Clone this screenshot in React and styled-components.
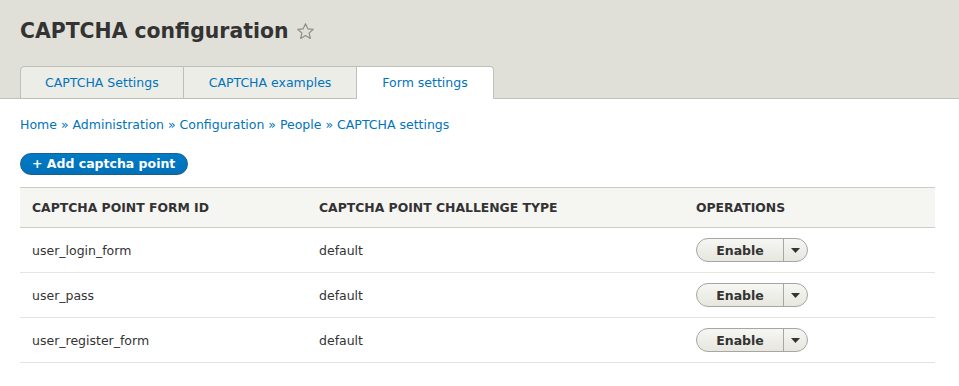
import React from "react";
import styled, { createGlobalStyle } from "styled-components";

const GlobalStyle = createGlobalStyle`
  html, body {
    margin: 0;
    padding: 0;
    background: #fff;
  }
  body {
    font-family: "DejaVu Sans", Verdana, sans-serif;
    font-size: 12.5px;
    color: #333;
  }
`;

const Header = styled.header`
  background: #e0e0d8;
  border-bottom: 1px solid #bfbfba;
  padding: 17px 20px 0;
`;

const Title = styled.h1`
  margin: 0 0 21px;
  font-size: 20.4px;
  font-weight: bold;
  line-height: 28px;
  color: #333;
  display: flex;
  align-items: center;
  gap: 8px;
`;

const Tabs = styled.ul`
  display: flex;
  margin: 0 0 -1px;
  padding: 0;
  list-style: none;
`;

const Tab = styled.li`
  box-sizing: border-box;
  height: 33px;
  padding: ${(p) => (p.first ? "0 24px" : "0 25px")};
  display: flex;
  align-items: center;
  border: 1px solid #bfbfba;
  border-bottom: ${(p) => (p.active ? "1px solid #fff" : "1px solid #bfbfba")};
  border-left-width: ${(p) => (p.first ? "1px" : "0")};
  border-radius: ${(p) => (p.first ? "4px 0 0 0" : p.last ? "0 4px 0 0" : "0")};
  background: ${(p) => (p.active ? "#fff" : "#ededE8")};
  color: #0074bd;
  font-size: 12.5px;
`;

const Content = styled.main`
  padding: 17px 24px 0 20px;
`;

const Breadcrumb = styled.nav`
  color: #0074bd;
  font-size: 12.5px;
  line-height: 18px;
  margin-bottom: 19px;
`;

const PrimaryButton = styled.button`
  box-sizing: border-box;
  height: 22px;
  padding: 0 12px 0 11px;
  border: 1px solid #1e5c90;
  border-radius: 20px;
  background: linear-gradient(to bottom, #007bc6, #0071b8);
  color: #fff;
  font-family: inherit;
  font-size: 12.5px;
  font-weight: bold;
  line-height: 20px;
  margin-bottom: 12px;
  cursor: pointer;
`;

const Table = styled.table`
  width: 100%;
  border-collapse: collapse;
  table-layout: fixed;
`;

const Th = styled.th`
  box-sizing: border-box;
  text-align: left;
  background: #f5f5f2;
  border-top: 1px solid #cdcdc8;
  border-bottom: 1px solid #cdcdc8;
  height: 40px;
  padding: 0 12px;
  font-size: 12.4px;
  font-weight: bold;
  text-transform: uppercase;
  color: #333;
  width: ${(p) => p.w || "auto"};
`;

const Td = styled.td`
  border-bottom: 1px solid #e6e4df;
  height: 44px;
  padding: 0 12px;
  font-size: 12.5px;
  color: #333;
`;

const Dropbutton = styled.div`
  display: inline-flex;
  box-sizing: border-box;
  height: 24px;
  width: 112px;
  border: 1px solid #a6a6a6;
  border-radius: 20px;
  background: linear-gradient(to bottom, #f6f6f3, #e7e7df);
  overflow: hidden;
  vertical-align: middle;
`;

const DropMain = styled.span`
  flex: 1;
  display: flex;
  align-items: center;
  justify-content: center;
  font-weight: bold;
  font-size: 12.5px;
  color: #333;
`;

const DropToggle = styled.span`
  width: 23px;
  border-left: 1px solid #a6a6a6;
  display: flex;
  align-items: center;
  justify-content: center;
`;

const Star = () => (
  <svg width="19" height="19" viewBox="0 0 20 20">
    <path
      d="M10 1.8l2.4 5.4 5.8.5-4.4 3.9 1.3 5.7L10 14.3l-5.1 3 1.3-5.7L1.8 7.7l5.8-.5z"
      fill="none"
      stroke="#8d8d8a"
      strokeWidth="1.2"
      strokeLinejoin="round"
    />
  </svg>
);

const rows = ["user_login_form", "user_pass", "user_register_form"];

export default function App() {
  return (
    <>
      <GlobalStyle />
      <Header>
        <Title>
          CAPTCHA configuration <Star />
        </Title>
        <Tabs>
          <Tab first>CAPTCHA Settings</Tab>
          <Tab>CAPTCHA examples</Tab>
          <Tab active last>Form settings</Tab>
        </Tabs>
      </Header>
      <Content>
        <Breadcrumb>
          Home » Administration » Configuration » People » CAPTCHA settings
        </Breadcrumb>
        <PrimaryButton>+ Add captcha point</PrimaryButton>
        <Table>
          <thead>
            <tr>
              <Th w="287px">Captcha point form ID</Th>
              <Th w="377px">Captcha point challenge type</Th>
              <Th>Operations</Th>
            </tr>
          </thead>
          <tbody>
            {rows.map((r) => (
              <tr key={r}>
                <Td>{r}</Td>
                <Td>default</Td>
                <Td>
                  <Dropbutton>
                    <DropMain>Enable</DropMain>
                    <DropToggle>
                      <svg width="9" height="5" viewBox="0 0 9 5">
                        <path d="M0 0h9L4.5 5z" fill="#333" />
                      </svg>
                    </DropToggle>
                  </Dropbutton>
                </Td>
              </tr>
            ))}
          </tbody>
        </Table>
      </Content>
    </>
  );
}
